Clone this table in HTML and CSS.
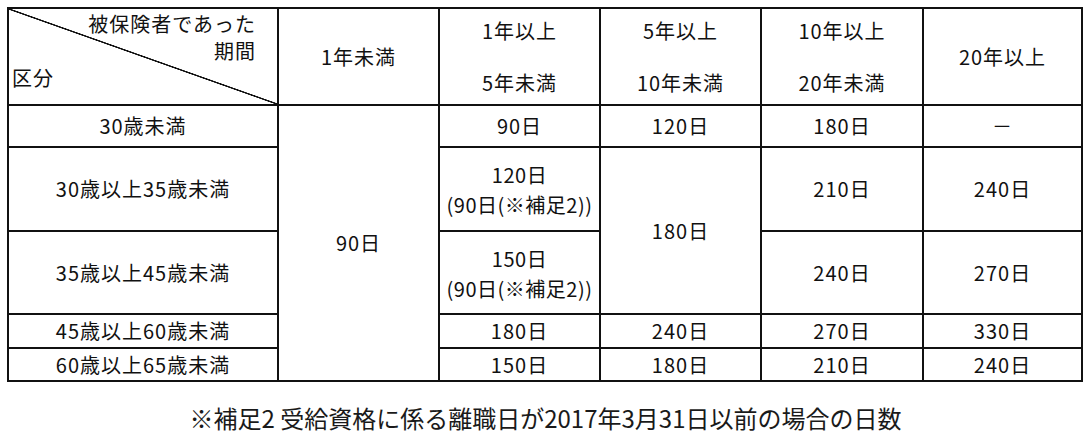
FILE: index.html
```html
<!DOCTYPE html>
<html lang="ja">
<head>
<meta charset="utf-8">
<title>所定給付日数</title>
<link rel="stylesheet" href="styles.css">
</head>
<body>
<table class="days">
  <colgroup>
    <col class="c-label">
    <col class="c-mid">
    <col class="c-mid">
    <col class="c-mid">
    <col class="c-mid2">
    <col class="c-last">
  </colgroup>
  <tr class="r-head">
    <td class="diag">
      <div class="diag-top">被保険者であった<br>期間</div>
      <div class="diag-bottom">区分</div>
    </td>
    <td>1年未満</td>
    <td class="head2">1年以上<br><span class="gap"></span>5年未満</td>
    <td class="head2">5年以上<br><span class="gap"></span>10年未満</td>
    <td class="head2">10年以上<br><span class="gap"></span>20年未満</td>
    <td>20年以上</td>
  </tr>
  <tr class="r-1">
    <td>30歳未満</td>
    <td rowspan="5">90日</td>
    <td>90日</td>
    <td>120日</td>
    <td>180日</td>
    <td>－</td>
  </tr>
  <tr class="r-2">
    <td>30歳以上35歳未満</td>
    <td class="two">120日<br>(90日(※補足2))</td>
    <td rowspan="2">180日</td>
    <td>210日</td>
    <td>240日</td>
  </tr>
  <tr class="r-3">
    <td>35歳以上45歳未満</td>
    <td class="two">150日<br>(90日(※補足2))</td>
    <td>240日</td>
    <td>270日</td>
  </tr>
  <tr class="r-4">
    <td>45歳以上60歳未満</td>
    <td>180日</td>
    <td>240日</td>
    <td>270日</td>
    <td>330日</td>
  </tr>
  <tr class="r-5">
    <td>60歳以上65歳未満</td>
    <td>150日</td>
    <td>180日</td>
    <td>210日</td>
    <td>240日</td>
  </tr>
</table>
<p class="note">※補足2 受給資格に係る離職日が2017年3月31日以前の場合の日数</p>
</body>
</html>
```

FILE: styles.css
```css
html, body {
  margin: 0;
  padding: 0;
  background: #ffffff;
}

body {
  width: 1091px;
  height: 438px;
  overflow: hidden;
  color: #111111;
  font-family: "Noto Sans CJK JP", "Noto Sans", sans-serif;
}

.days {
  margin: 7px 0 0 7px;
  width: 1074px;
  table-layout: fixed;
  border-collapse: collapse;
  font-size: 20px;
  letter-spacing: 1px;
}

.c-label { width: 270px; }
.c-mid { width: 161px; }
.c-mid2 { width: 162px; }
.c-last { width: 159px; }

.days td {
  border: 2px solid #111111;
  padding: 0;
  text-align: center;
  vertical-align: middle;
  white-space: nowrap;
  line-height: 26px;
}

.r-head { height: 97px; }
.r-1 { height: 42px; }
.r-2 { height: 84px; }
.r-3 { height: 83px; }
.r-4 { height: 34px; }
.r-5 { height: 33px; }

.head2 {
  line-height: 26px;
}

.gap {
  display: block;
  height: 26px;
}

.days td.two {
  line-height: 30px;
  padding-top: 2px;
  letter-spacing: 0.5px;
}

.days td.diag {
  vertical-align: top;
  text-align: left;
  background: linear-gradient(to top right,
    transparent calc(50% - 1px),
    #111111 calc(50% - 0.5px),
    #111111 calc(50% + 0.5px),
    transparent calc(50% + 1px));
}

.diag-top {
  text-align: right;
  padding-right: 21px;
  line-height: 27px;
  padding-top: 1px;
}

.diag-bottom {
  text-align: left;
  padding-left: 3px;
  line-height: 27px;
}

.note {
  margin: 18px 0 0 0;
  text-align: center;
  font-size: 24px;
  line-height: 36px;
  color: #1a1a1a;
}
```
